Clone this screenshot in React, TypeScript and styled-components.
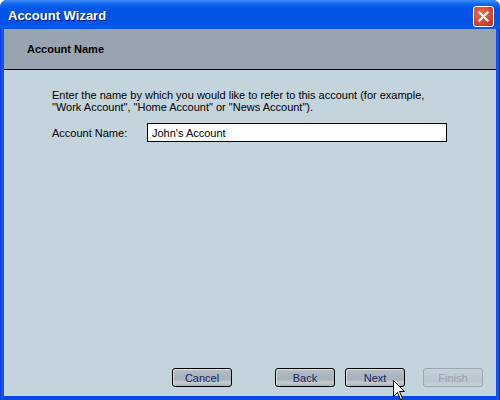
import React from "react";
import styled, { createGlobalStyle } from "styled-components";

const Global = createGlobalStyle`
  html, body { margin: 0; padding: 0; background: #ffffff; }
  body { font-family: "Liberation Sans", Arial, sans-serif; }
`;

const Window = styled.div`
  position: relative;
  width: 500px;
  height: 400px;
  display: flex;
  flex-direction: column;
  background: linear-gradient(90deg, #0831d9 0px, #1660f0 2px, #0a46e0 4px, #0a46e0 496px, #1660f0 498px, #0020c8 500px);
  border-radius: 7px 7px 0 0;
  overflow: hidden;
`;

const TitleBar = styled.div`
  height: 29px;
  flex: none;
  display: flex;
  align-items: center;
  justify-content: space-between;
  padding: 0 6px 0 8px;
  background: linear-gradient(
    180deg,
    #3d8cf7 0px,
    #2a7bf4 2px,
    #0b61ea 5px,
    #0055e5 9px,
    #0254e6 18px,
    #0152e6 24px,
    #0a5ff0 27px,
    #0a4fdc 29px
  );
`;

const Title = styled.span`
  color: #ffffff;
  font-family: "Liberation Sans", Arial, sans-serif;
  font-weight: bold;
  font-size: 13px;
  text-shadow: 1px 1px 0 #0a1c8c;
  margin-top: 2px;
`;

const CloseButton = styled.div`
  width: 19px;
  height: 19px;
  border: 1px solid #ffffff;
  border-radius: 3px;
  background: radial-gradient(circle at 40% 35%, #e8724f 0%, #d4442a 60%, #b8301c 100%);
  display: flex;
  align-items: center;
  justify-content: center;
  margin-top: 3px;
`;

const Frame = styled.div`
  flex: 1;
  display: flex;
  flex-direction: column;
  margin: 0 4px 4px 4px;
  background: #c4d4dd;
`;

const Header = styled.div`
  height: 40px;
  flex: none;
  display: flex;
  align-items: center;
  padding-left: 23px;
  background: #98a5b0;
  border-bottom: 1px solid #000000;
  font-size: 11px;
  font-weight: bold;
  color: #000000;
`;

const Body = styled.div`
  flex: 1;
  padding: 19px 48px 0 48px;
  font-size: 11px;
  color: #000000;
`;

const Intro = styled.p`
  margin: 0;
  line-height: 12px;
`;

const FieldRow = styled.div`
  display: flex;
  align-items: center;
  margin-top: 10px;
`;

const Label = styled.label`
  width: 95px;
  font-size: 11px;
`;

const Input = styled.div`
  width: 294px;
  height: 17px;
  border: 1px solid #000000;
  background: #ffffff;
  padding-left: 4px;
  display: flex;
  align-items: center;
  font-size: 11px;
`;

const Footer = styled.div`
  flex: none;
  display: flex;
  padding: 0 13px 9px 168px;
`;

const Button = styled.div<{ $gap?: number; $disabled?: boolean }>`
  width: 58px;
  height: 17px;
  margin-left: ${(p) => p.$gap ?? 0}px;
  border: 1px solid ${(p) => (p.$disabled ? "#9aa6b0" : "#000000")};
  border-radius: 3px;
  display: flex;
  align-items: center;
  justify-content: center;
  font-size: 11px;
  color: ${(p) => (p.$disabled ? "#96a2ad" : "#1a2458")};
  background: ${(p) =>
    p.$disabled
      ? "linear-gradient(180deg, #c6d2d9 0%, #bac6ce 70%, #c8d3da 100%)"
      : "linear-gradient(180deg, #b9c3ca 0%, #aeb9c2 20%, #a7b2bb 60%, #c4ccd2 80%, #a9b4bd 100%)"};
  box-shadow: ${(p) => (p.$disabled ? "none" : "inset 1px 1px 0 #d8e0e5")};
`;

const Cursor = styled.svg`
  position: absolute;
  left: 393px;
  top: 380px;
`;

export default function App() {
  return (
    <>
      <Global />
      <Window>
        <TitleBar>
          <Title>Account Wizard</Title>
          <CloseButton>
            <svg width="11" height="11" viewBox="0 0 11 11">
              <path d="M1.5 1.5 L9.5 9.5 M9.5 1.5 L1.5 9.5" stroke="#ffffff" strokeWidth="2" strokeLinecap="square" />
            </svg>
          </CloseButton>
        </TitleBar>
        <Frame>
          <Header>Account Name</Header>
          <Body>
            <Intro>
              Enter the name by which you would like to refer to this account (for example,
              <br />
              "Work Account", "Home Account" or "News Account").
            </Intro>
            <FieldRow>
              <Label>Account Name:</Label>
              <Input>John's Account</Input>
            </FieldRow>
          </Body>
          <Footer>
            <Button>Cancel</Button>
            <Button $gap={43}>Back</Button>
            <Button $gap={10}>Next</Button>
            <Button $gap={18} $disabled>
              Finish
            </Button>
          </Footer>
        </Frame>
        <Cursor width="13" height="21" viewBox="0 0 13 21">
          <path
            d="M0.5 0.5 L0.5 16.5 L4.5 12.5 L7.5 19.5 L9.5 18.5 L6.5 11.5 L11.5 11.5 Z"
            fill="#ffffff"
            stroke="#000000"
            strokeWidth="1"
          />
        </Cursor>
      </Window>
    </>
  );
}
